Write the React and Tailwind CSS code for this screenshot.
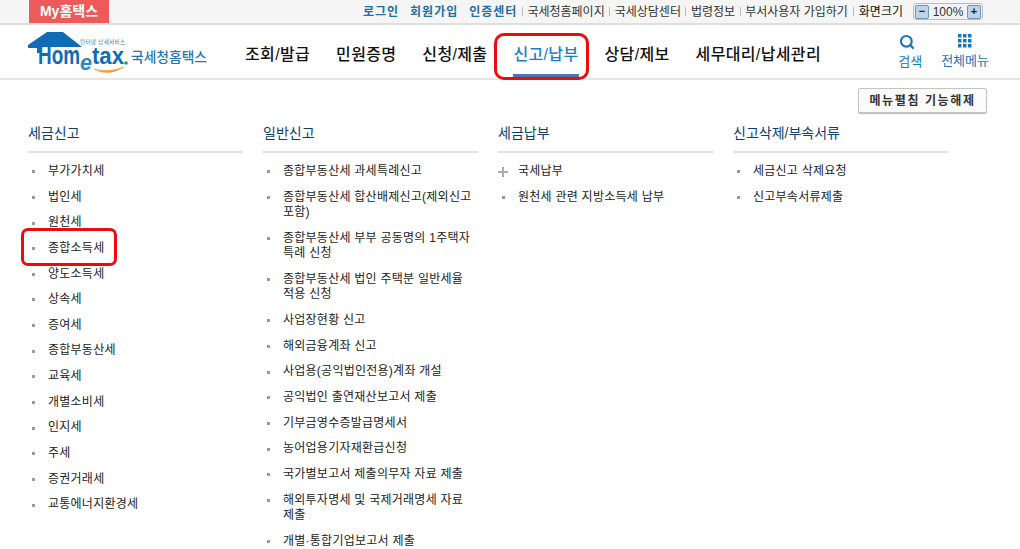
import { Search } from 'lucide-react';

const FONT = "font-['Liberation_Sans','Noto_Sans_CJK_KR',sans-serif]";

const columns = [
  {
    title: '세금신고',
    items: ['부가가치세', '법인세', '원천세', '종합소득세', '양도소득세', '상속세', '증여세', '종합부동산세', '교육세', '개별소비세', '인지세', '주세', '증권거래세', '교통에너지환경세'],
  },
  {
    title: '일반신고',
    items: [
      '종합부동산세 과세특례신고',
      '종합부동산세 합산배제신고(제외신고 포함)',
      '종합부동산세 부부 공동명의 1주택자 특례 신청',
      '종합부동산세 법인 주택분 일반세율 적용 신청',
      '사업장현황 신고',
      '해외금융계좌 신고',
      '사업용(공익법인전용)계좌 개설',
      '공익법인 출연재산보고서 제출',
      '기부금영수증발급명세서',
      '농어업용기자재환급신청',
      '국가별보고서 제출의무자 자료 제출',
      '해외투자명세 및 국제거래명세 자료 제출',
      '개별·통합기업보고서 제출',
    ],
  },
  { title: '세금납부', items: ['국세납부', '원천세 관련 지방소득세 납부'], plusFirst: true },
  { title: '신고삭제/부속서류', items: ['세금신고 삭제요청', '신고부속서류제출'] },
];

const navItems = ['조회/발급', '민원증명', '신청/제출', '신고/납부', '상담/제보', '세무대리/납세관리'];
const topLinks = ['국세청홈페이지', '국세상담센터', '법령정보', '부서사용자 가입하기'];

function Logo() {
  return (
    <svg width="190" height="50" viewBox="0 0 190 50" className="shrink-0 self-start mt-[3px]">
      <path d="M4 17 L23 4 L39 4 L58 19 L17 19 L17 25 L13 25 L13 20 L4 20 Z" fill="#0f6cb5" />
      <text x="56" y="16" fontSize="5.5" fill="#2a7dbd" textLength="45">인터넷 납세서비스</text>
      <text x="14" y="36" fontSize="26" fontWeight="700" fill="#0f6cb5" textLength="42" lengthAdjust="spacingAndGlyphs">Hom</text>
      <text x="56" y="42" fontSize="22" fontStyle="italic" fontWeight="700" fill="#2a8ac8" textLength="12" lengthAdjust="spacingAndGlyphs">e</text>
      <text x="68" y="36" fontSize="23" fontWeight="700" fill="#0f6cb5" textLength="32" lengthAdjust="spacingAndGlyphs">tax</text>
      <circle cx="102" cy="35" r="1.8" fill="#1f9e4b" />
      <path d="M70 41 Q 84 49 100 39 Q 84 45 70 41 Z" fill="#f0a030" stroke="#f0a030" strokeWidth="0.6" />
      <text x="107" y="34" fontSize="14" fontWeight="500" fill="#1f78ba" textLength="76" lengthAdjust="spacingAndGlyphs">국세청홈택스</text>
    </svg>
  );
}

function GridIcon() {
  return (
    <svg width="14" height="14" viewBox="0 0 14 14" fill="#1b75bb">
      {[0, 5, 10].flatMap((y) => [0, 5, 10].map((x) => <rect key={`${x}-${y}`} x={x} y={y} width="3.5" height="3.5" />))}
    </svg>
  );
}

function MenuColumn({ title, items, plusFirst }) {
  return (
    <div className="w-[215px] shrink-0">
      <h3 className="h-[41px] border-b-2 border-[#e2e2e2] pt-[11px] text-[14px] leading-[20px] text-[#0b3f6e] font-normal">{title}</h3>
      <ul className="mt-[11px] flex flex-col gap-[10.15px] text-[12px] leading-[15.5px] tracking-[0.25px] text-[#222] break-keep">
        {items.map((item, i) => (
          <li key={item} className="flex">
            <span className="flex h-[15.5px] w-[20px] shrink-0 items-center">
              {plusFirst && i === 0 ? (
                <span className="relative block h-[10px] w-[10px]">
                  <span className="absolute left-[4px] top-0 h-[10px] w-[2px] bg-[#aaa]" />
                  <span className="absolute left-0 top-[4px] h-[2px] w-[10px] bg-[#aaa]" />
                </span>
              ) : (
                <span className="ml-[4px] block h-[3px] w-[3px] bg-[#999]" />
              )}
            </span>
            <span className="block">{item}</span>
          </li>
        ))}
      </ul>
    </div>
  );
}

export default function App() {
  return (
    <div className={`relative h-[549px] w-[1020px] overflow-hidden bg-white ${FONT}`}>
      {/* 상단 유틸 바 */}
      <div className="flex h-[25px] items-start justify-between border-b-2 border-[#dedede] bg-[#f5f5f5] pl-[29px] pr-[37px]">
        <div className="h-[23px] w-[80px] bg-[#ec5a5a] pt-[1px] text-center text-[14px] leading-[21px] font-bold text-white">My홈택스</div>
        <div className="flex h-[23px] items-center text-[12px] text-[#333]">
          <a className="mr-[11px] tracking-[1px] font-bold text-[#1f6fa8]">로그인</a>
          <a className="mr-[11px] tracking-[1px] font-bold text-[#1f6fa8]">회원가입</a>
          <a className="tracking-[1px] font-bold text-[#1f6fa8]">인증센터</a>
          {topLinks.map((t) => (
            <span key={t} className="flex items-center">
              <span className="mx-[4.5px] h-[9px] w-[1px] bg-[#bbb]" />
              {t}
            </span>
          ))}
          <span className="mx-[5px] h-[9px] w-[1px] bg-[#bbb]" />
          <span className="text-[#111]">화면크기</span>
          <div className="ml-[10px] flex h-[17px] w-[70px] items-center justify-between rounded-[3px] border border-[#b5bcc4] bg-[#f2f2f2] px-[1px] text-[12px]">
            <span className="flex h-[14px] w-[14px] items-center justify-center rounded-[2px] border border-[#6f97bd] bg-[#bcd3ea] text-[11px] leading-none font-bold text-[#223]">−</span>
            <span>100%</span>
            <span className="flex h-[14px] w-[14px] items-center justify-center rounded-[2px] border border-[#6f97bd] bg-[#bcd3ea] text-[11px] leading-none font-bold text-[#223]">+</span>
          </div>
        </div>
      </div>

      {/* 메인 내비게이션 */}
      <div className="flex h-[55px] items-center border-b-2 border-[#e6e6e6] pl-[24px]">
        <Logo />
        <nav className="ml-[31px] flex h-full items-center text-[16px] tracking-[0.35px] font-medium text-[#111]">
          {navItems.map((n) => {
            const active = n === '신고/납부';
            return (
              <div key={n} className={`relative mr-[26px] flex h-full items-center pt-[7px] ${active ? 'text-[#1b7fc4]' : ''}`}>
                {n}
                {active && <span className="absolute bottom-[1px] left-0 right-0 h-[3px] bg-[#4a76b0]" />}
              </div>
            );
          })}
        </nav>
        <div className="ml-auto mr-[31px] flex items-start gap-[19px] pt-[1px] text-[13px] leading-[18px] text-[#1b75bb]">
          <div className="flex flex-col items-center">
            <Search size={16} strokeWidth={3.2} className="mb-[3px] mt-[1px] mr-[6px]" />
            검색
          </div>
          <div className="flex flex-col items-center">
            <span className="mb-[4px] mt-[1px]"><GridIcon /></span>
            전체메뉴
          </div>
        </div>
      </div>

      {/* 메뉴 펼침 버튼 */}
      <div className="flex justify-end pr-[33px] pt-[8px]">
        <button className="h-[25px] w-[129px] rounded-[2px] border border-[#c4c4c4] bg-[#fbfbfb] text-[12px] font-bold tracking-[1.6px] text-[#333] shadow-[0_1px_1px_#bbb]">메뉴펼침 기능해제</button>
      </div>

      {/* 전체 메뉴 */}
      <div className="mt-[-1px] flex gap-[20px] pl-[28px]">
        {columns.map((c) => <MenuColumn key={c.title} {...c} />)}
      </div>

      {/* 빨간 강조 표시 */}
      <div className="absolute left-[494px] top-[33px] h-[47px] w-[95px] rounded-[10px] border-[3px] border-[#ee0a0a]" />
      <div className="absolute left-[21px] top-[228px] h-[38px] w-[96px] rounded-[7px] border-[3px] border-[#ee0a0a]" />
    </div>
  );
}
